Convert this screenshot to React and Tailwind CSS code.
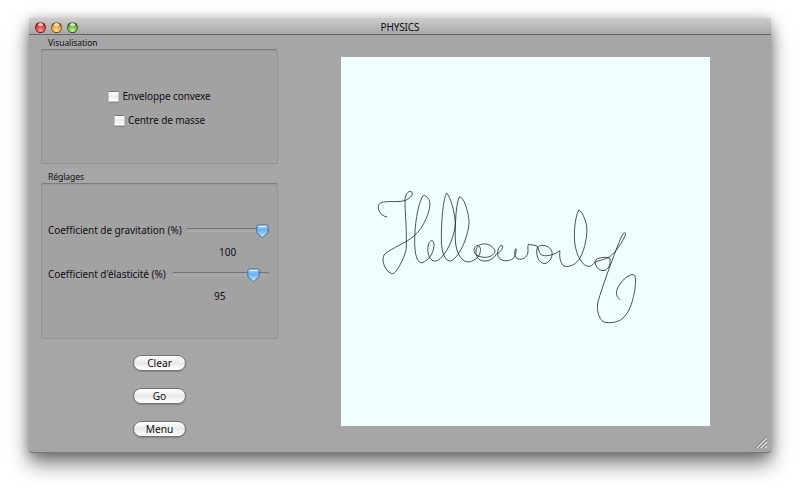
const FONT = "font-['Noto_Sans','Open_Sans',sans-serif]";

function Light({ className }) {
  return (
    <span className={`relative block size-[11px] overflow-hidden rounded-full border border-black/40 ${className}`}>
      <span className="absolute left-[2px] top-0 h-[3px] w-[5px] rounded-full bg-white/70" />
    </span>
  );
}

function Group({ title, labelClass, boxClass, children }) {
  return (
    <section>
      <h2 className={`pl-[7px] text-[8.6px] tracking-[-0.1px] ${labelClass}`}>{title}</h2>
      <div className={`rounded-[2px] border border-[#929292] border-t-[#7c7c7c] bg-[#a2a2a2] shadow-[inset_0_1px_1px_#989898] ${boxClass}`}>{children}</div>
    </section>
  );
}

function Check({ children }) {
  return (
    <label className="flex h-[24px] items-center justify-center gap-[3px]">
      <span className="size-[11px] rounded-[1px] border border-[#c4c4c4] border-t-[#777] bg-gradient-to-b from-white via-[#ececec] to-white shadow-[0_1px_1px_#858585]" />
      <span className="whitespace-nowrap tracking-[-0.1px]">{children}</span>
    </label>
  );
}

function Slider({ label, labelClass, trackClass, thumbClass }) {
  return (
    <div className="flex h-[14px] items-center pl-[6px]">
      <span className={`shrink-0 whitespace-nowrap tracking-[-0.05px] ${labelClass}`}>{label}</span>
      <div className={`relative h-[4px] rounded-full border border-[#8e8e8e] border-b-[#b0b0b0] border-t-[#727272] bg-[#a5a5a5] ${trackClass}`}>
        <svg viewBox="0 0 13 15" className={`absolute -top-[5px] h-[15px] w-[13px] ${thumbClass}`}>
          <defs>
            <linearGradient id="thumb" x1="0" y1="0" x2="0" y2="1">
              <stop offset="0" stopColor="#b9dcfa" />
              <stop offset="0.35" stopColor="#6fb2f2" />
              <stop offset="0.5" stopColor="#72b8f5" />
              <stop offset="1" stopColor="#d4f6ff" />
            </linearGradient>
          </defs>
          <path d="M2.2 1H10.8Q12.2 1 12.2 2.4V8.6L6.5 13.6L.8 8.6V2.4Q.8 1 2.2 1Z" fill="url(#thumb)" stroke="#3d6598" strokeWidth="0.9" />
          <path d="M3 2.4h7" stroke="#edf7ff" strokeWidth="1" />
        </svg>
      </div>
    </div>
  );
}

function PushButton({ children }) {
  return (
    <button className="flex h-[16px] w-[53px] items-center justify-center rounded-full border border-[#747474] bg-gradient-to-b from-white via-[#e9e9e9] to-white text-[10.2px] leading-none shadow-[0_1px_1px_#858585]">
      {children}
    </button>
  );
}

function Drawing() {
  return (
    <svg viewBox="0 0 369 369" className="size-full">
      <g transform="translate(29 123) scale(.33333)" fill="none" stroke="#202626" strokeWidth="2.4" strokeLinecap="round" strokeLinejoin="round">
        <path d="M51 111C28 108 16 79 32 68C55 61 87 69 109 60C121 55 133 40 124 35C112 32 105 46 105 60C105 100 109 130 109 160L109 205C104 232 80 280 68 281C48 280 30 239 44 222C66 204 110 188 132 168C161 145 185 86 179 64C174 50 163 43 158 48C142 78 134 137 134 185C134 221 141 251 156 248C178 240 190 220 192 198C193 181 184 177 178 188C169 206 174 229 185 240C196 247 206 241 214 232C237 210 255 161 256 130C254 90 240 50 230 39C218 60 214 130 214 180C214 215 225 246 243 243C271 230 298 160 297 122C294 90 281 50 268 51C258 70 255 130 256 180C258 220 275 247 297 246C318 242 334 225 331 205C327 192 316 194 312 209C311 224 327 232 347 232C365 231 378 220 374 209C365 194 344 187 328 195C314 205 315 226 327 238C343 250 371 240 379 222C394 216 401 202 396 196C386 196 380 215 385 230C392 245 416 246 430 235C436 227 440 214 438 206C432 213 433 225 440 235C453 242 467 235 472 224C477 213 471 201 475 193L500 197C506 203 506 217 513 224C525 231 549 227 570 212C567 229 571 250 582 258C602 263 617 252 630 235C645 206 653 166 650 138C645 113 635 94 626 90C613 118 611 165 615 195C620 224 634 252 650 258C666 263 673 249 680 237C693 231 710 231 719 234C723 248 718 266 705 271C690 275 677 263 675 246C690 240 710 239 724 226C744 208 767 170 767 160C760 151 751 178 739 208C722 252 698 317 684 365C678 390 688 429 711 428C746 430 762 417 777 390C796 350 801 290 793 285C777 277 747 309 740 332C738 348 744 356 750 358M502 202C512 191 533 195 543 209C552 223 543 245 525 251C507 251 495 225 502 202" />
      </g>
    </svg>
  );
}

export default function App() {
  return (
    <div className={`h-[493px] w-[800px] overflow-hidden bg-white pl-[29px] pt-[18px] text-[10px] leading-[14px] text-[#101010] ${FONT}`}>
      <main className="flex h-[435px] w-[742px] flex-col rounded-t-[3px] rounded-b-[4px] border-b border-[#777] bg-[#a6a6a6] shadow-[0_11px_20px_rgba(0,0,0,0.5),0_1px_12px_rgba(0,0,0,0.25)]">
        <header className="grid h-[17px] shrink-0 grid-cols-3 items-center rounded-t-[3px] border-b border-[#686868] bg-gradient-to-b from-[#cdcdcd] to-[#a7a7a7]">
          <div className="flex gap-[5px] pl-[6px] pt-[2px]">
            <Light className="bg-[radial-gradient(circle_at_50%_85%,#ff9b9b,#e33e42_55%,#86191c)]" />
            <Light className="bg-[radial-gradient(circle_at_50%_85%,#ffe69b,#eea23f_55%,#965719)]" />
            <Light className="bg-[radial-gradient(circle_at_50%_85%,#c9f59b,#70b544_55%,#2d651c)]" />
          </div>
          <h1 className="pt-[2px] text-center text-[10px] tracking-[-0.15px]">PHYSICS</h1>
        </header>
        <div className="relative flex flex-1 pl-[12px]">
          <aside className="flex w-[237px] flex-col">
            <Group title="Visualisation" labelClass="h-[14px] leading-[17px]" boxClass="h-[115px] pt-[34px]">
              <Check>Enveloppe convexe</Check>
              <Check>Centre de masse</Check>
            </Group>
            <Group title="Réglages" labelClass="mt-[6px] h-[13px] leading-[14px]" boxClass="h-[156px] pt-[39px]">
              <Slider label="Coefficient de gravitation (%)" labelClass="w-[138px]" trackClass="w-[82px]" thumbClass="left-[69px]" />
              <div className="mt-[8px] pl-[177px]">100</div>
              <div className="mt-[8px]">
                <Slider label="Coefficient d'élasticité (%)" labelClass="w-[124px]" trackClass="w-[97px]" thumbClass="left-[74px]" />
              </div>
              <div className="mt-[8px] pl-[172px]">95</div>
            </Group>
            <div className="flex flex-col items-center gap-[17px] pt-[16px]">
              <PushButton>Clear</PushButton>
              <PushButton>Go</PushButton>
              <PushButton>Menu</PushButton>
            </div>
          </aside>
          <div className="ml-[63px] mt-[22px] size-[369px] bg-[#f1ffff]">
            <Drawing />
          </div>
          <svg viewBox="0 0 12 12" className="absolute bottom-[4px] right-[4px] size-[12px]">
            <path d="M0 12L12 0M4 12L12 4M8 12L12 8" stroke="#777" strokeWidth="0.9" />
            <path d="M2 12L12 2M6 12L12 6M10 12L12 10" stroke="#e0e0e0" strokeWidth="1.2" />
          </svg>
        </div>
      </main>
    </div>
  );
}
